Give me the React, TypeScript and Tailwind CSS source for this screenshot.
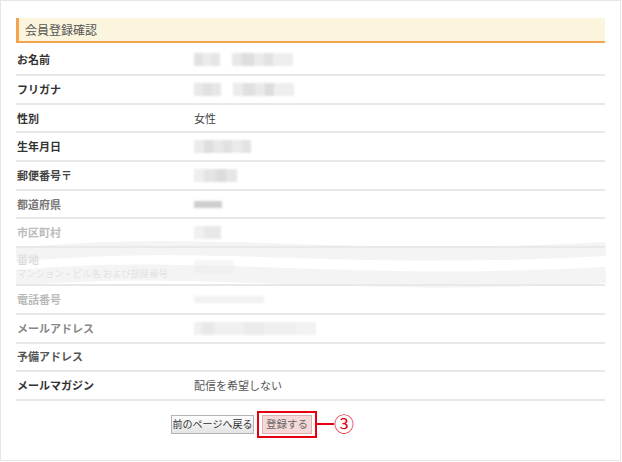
type Seg = [number, string]

type Row = {
  label: string
  sub?: string
  labelColor: string
  value?: string
  valueColor?: string
  blocks?: Seg[][]
  fade?: string
  tall?: boolean
}

const rows: Row[] = [
  {
    label: 'お名前',
    labelColor: 'text-[#333]',
    blocks: [
      [[9, '#e2e2e2'], [8, '#ececec'], [9, '#e6e6e6']],
      [[10, '#e8e8e8'], [12, '#dedede'], [10, '#ebebeb'], [9, '#e2e2e2'], [20, '#eeeeee']],
    ],
  },
  {
    label: 'フリガナ',
    labelColor: 'text-[#333]',
    blocks: [
      [[9, '#e9e9e9'], [9, '#e1e1e1'], [9, '#e7e7e7']],
      [[10, '#ececec'], [12, '#e0e0e0'], [10, '#e9e9e9'], [9, '#dddddd'], [20, '#eeeeee']],
    ],
  },
  { label: '性別', labelColor: 'text-[#333]', value: '女性', valueColor: 'text-[#444]' },
  {
    label: '生年月日',
    labelColor: 'text-[#333]',
    blocks: [[[10, '#ebebeb'], [9, '#dedede'], [10, '#e8e8e8'], [9, '#e1e1e1'], [10, '#ebebeb'], [9, '#e3e3e3']]],
  },
  {
    label: '郵便番号〒',
    labelColor: 'text-[#444]',
    blocks: [[[10, '#eeeeee'], [12, '#e4e4e4'], [10, '#dcdcdc'], [11, '#e6e6e6']]],
  },
  {
    label: '都道府県',
    labelColor: 'text-[#777]',
    blocks: [[[28, '#cfcfcf']]],
    fade: 'h-[7px]',
  },
  {
    label: '市区町村',
    labelColor: 'text-[#bbb]',
    blocks: [[[10, '#f0f0f0'], [17, '#e8e8e8']]],
  },
  {
    label: '番地',
    sub: 'マンション・ビル名 および部屋番号',
    labelColor: 'text-[#dadada]',
    blocks: [[[40, '#f6f6f6']]],
    tall: true,
  },
  {
    label: '電話番号',
    labelColor: 'text-[#bbb]',
    blocks: [[[70, '#f1f1f1']]],
    fade: 'h-[7px]',
  },
  {
    label: 'メールアドレス',
    labelColor: 'text-[#888]',
    blocks: [[[8, '#f0f0f0'], [12, '#e8e8e8'], [30, '#f0f0f0'], [20, '#ebebeb'], [32, '#efefef'], [20, '#f2f2f2']]],
  },
  { label: '予備アドレス', labelColor: 'text-[#555]' },
  { label: 'メールマガジン', labelColor: 'text-[#333]', value: '配信を希望しない', valueColor: 'text-[#555]' },
]

function Blurred({ groups, height }: { groups: Seg[][]; height?: string }) {
  return (
    <div className="flex items-center gap-[12px] blur-[0.8px]">
      {groups.map((group, gi) => (
        <div key={gi} className={`flex ${height ?? 'h-[13px]'}`}>
          {group.map(([w, c], si) => (
            <span key={si} style={{ width: w, backgroundColor: c }} className="block h-full" />
          ))}
        </div>
      ))}
    </div>
  )
}

export default function App() {
  return (
    <div
      className="h-[462px] w-[622px] bg-white"
      style={{ fontFamily: '"Noto Sans CJK JP", "Noto Sans", sans-serif' }}
    >
      <div className="h-[461px] w-[621px] border border-[#e6e6e6] px-[15px] pt-[17px]">
        <div className="flex h-[25px] items-center border-b-2 border-l-[3px] border-b-[#f5a34f] border-l-[#f5a34f] bg-[#fcf5dd] pl-[6px] text-[12px] text-[#555]">
          会員登録確認
        </div>

        <div className="relative mt-[1px]">
          {rows.map((row) => (
            <div
              key={row.label}
              className={`flex border-b-2 border-[#e8e8e8] ${
                row.label === 'お名前' ? 'h-[32px]' : row.tall ? 'h-[38px]' : 'h-[28.7px]'
              } items-center`}
            >
              <div className={`w-[178px] whitespace-nowrap pl-[1px] text-[11px] font-bold ${row.labelColor}`}>
                <div className="leading-[13px]">{row.label}</div>
                {row.sub ? (
                  <div className="mt-[1px] text-[9.5px] leading-[12px] font-normal tracking-[-0.2px]">{row.sub}</div>
                ) : null}
              </div>
              <div className={`text-[11px] ${row.valueColor ?? ''}`}>
                {row.value ? row.value : null}
                {row.blocks ? <Blurred groups={row.blocks} height={row.fade} /> : null}
              </div>
            </div>
          ))}

          <svg
            className="pointer-events-none absolute left-0 top-[190px]"
            width="590"
            height="62"
            viewBox="0 0 590 62"
          >
            <path
              d="M0 21 C 180 2, 330 30, 590 15"
              fill="none"
              stroke="#e9e9e9"
              strokeOpacity="0.5"
              strokeWidth="14"
            />
            <path
              d="M0 44 C 180 27, 330 56, 590 41"
              fill="none"
              stroke="#e9e9e9"
              strokeOpacity="0.5"
              strokeWidth="16"
            />
          </svg>
        </div>

        <div className="mt-[10px] flex items-center pl-[155px]">
          <button
            type="button"
            className="flex h-[19px] w-[83px] items-center justify-center whitespace-nowrap border border-[#b4b4b4] bg-gradient-to-b from-[#fefefe] to-[#e4e4e4] text-[10px] leading-none text-[#333]"
          >
            前のページへ戻る
          </button>
          <div className="ml-[3px] flex border-2 border-[#e60012] px-[3px] py-[2px]">
            <button
              type="button"
              className="flex h-[19px] w-[50px] items-center justify-center whitespace-nowrap border border-[#dcb2b2] bg-[#f5d8d8] text-[10.5px] leading-none text-[#666]"
            >
              登録する
            </button>
          </div>
          <span className="block h-[2px] w-[17px] bg-[#e60012]" />
          <span className="text-[20px] leading-none text-[#e60012]">③</span>
        </div>
      </div>
    </div>
  )
}
